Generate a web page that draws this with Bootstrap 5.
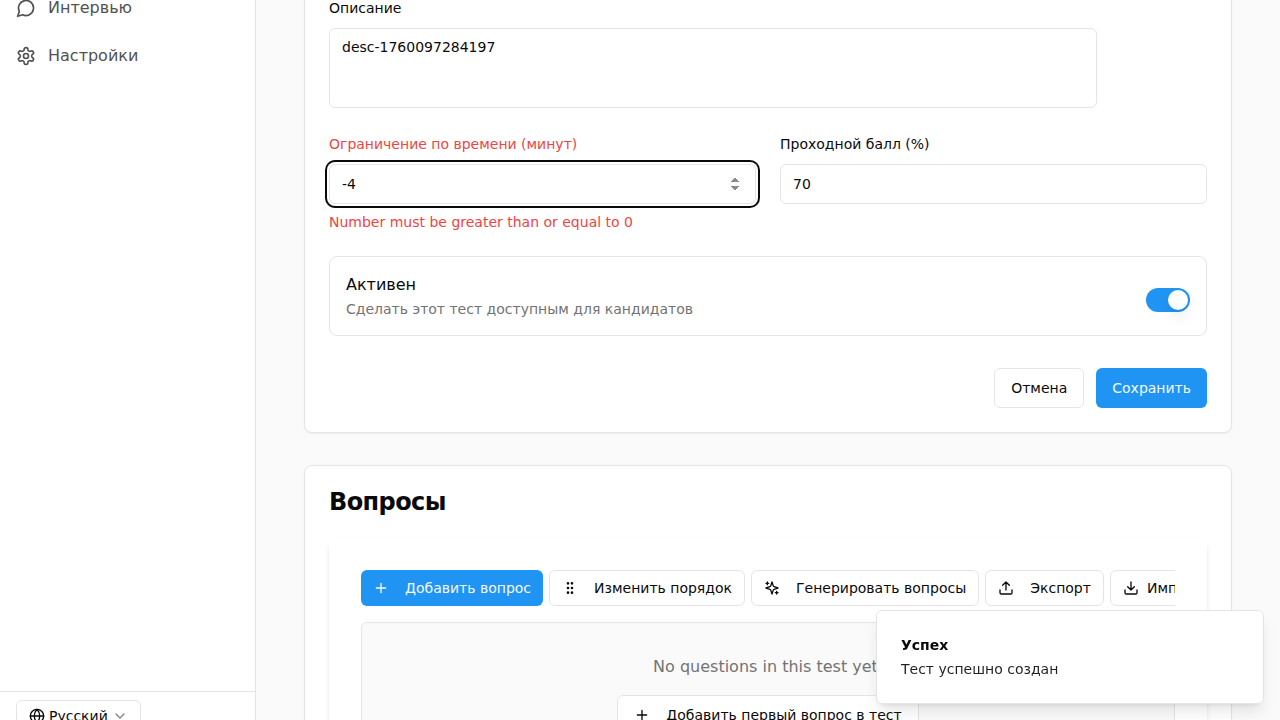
<!DOCTYPE html>
<html lang="ru">
<head>
<meta charset="utf-8">
<meta name="viewport" content="width=device-width, initial-scale=1">
<title>Редактирование теста</title>
<link href="https://cdn.jsdelivr.net/npm/bootstrap@5.3.0/dist/css/bootstrap.min.css" rel="stylesheet">
<style>
  :root {
    --ink: #0a0a0a;
    --line: #e5e5e5;
    --soft: #fafafa;
    --brand: #2094f3;
    --danger: #ef4444;
    --muted: #737373;
  }
  body {
    font-family: "DejaVu Sans", sans-serif;
    font-size: 14px;
    line-height: 20px;
    color: var(--ink);
    background: var(--soft);
  }
  svg {
    fill: none;
    stroke: currentColor;
    stroke-width: 2;
    stroke-linecap: round;
    stroke-linejoin: round;
    flex: none;
  }
  .shell { height: 100vh; }

  /* Sidebar, shown scrolled past its first entries */
  .side {
    width: 256px;
    height: calc(100vh + 20px);
    background: #fff;
    border-right: 1px solid var(--line);
  }
  .side-nav { margin-top: -12px; }
  .side-nav a {
    height: 40px;
    font-size: 16px;
    line-height: 24px;
    color: #525252;
    text-decoration: none;
  }
  .side-foot { border-top: 1px solid var(--line); }

  /* Content, scrolled to the end of the form */
  .content { margin-top: -29px; min-width: 0; }
  .panel {
    background: #fff;
    border: 1px solid var(--line);
    border-radius: 8px;
    box-shadow: 0 1px 2px rgba(0, 0, 0, .05);
  }
  .panel + .panel { margin-top: 32px; }
  .form-label { display: block; line-height: 24px; }
  .form-control {
    font-size: 14px;
    line-height: 20px;
    color: var(--ink);
    background: #fff;
    border-color: var(--line);
    border-radius: 6px;
    padding: 8px 12px;
  }
  input.form-control { height: 40px; }
  textarea.form-control { height: 80px; max-width: 768px; resize: none; }
  .form-control.active,
  .form-control:focus {
    color: var(--ink);
    border-color: var(--line);
    box-shadow: 0 0 0 2px #fff, 0 0 0 4px var(--ink);
  }
  .form-control.active::-webkit-inner-spin-button { opacity: 1; }
  .pair { display: grid; grid-template-columns: 1fr 1fr; gap: 24px; }
  .is-error { color: var(--danger); }
  .hint { color: var(--muted); }

  .option { border: 1px solid var(--line); border-radius: 8px; }
  .option-title { font-size: 16px; line-height: 24px; margin-bottom: 2px; }
  .toggle {
    appearance: none;
    display: block;
    width: 44px;
    height: 24px;
    margin: 0;
    padding: 2px;
    border-radius: 12px;
    background: var(--brand);
  }
  .toggle::before {
    content: "";
    display: block;
    width: 20px;
    height: 20px;
    border-radius: 50%;
    background: #fff;
    box-shadow: 0 10px 15px -3px rgba(0, 0, 0, .1), 0 4px 6px -4px rgba(0, 0, 0, .1);
  }
  .toggle:checked::before { margin-left: 20px; }
  .actions { gap: 12px; margin-top: 32px; }

  .btn {
    --bs-btn-font-size: 14px;
    --bs-btn-line-height: 20px;
    --bs-btn-border-radius: 6px;
    --bs-btn-color: var(--ink);
    --bs-btn-bg: #fff;
    --bs-btn-border-color: var(--line);
    --bs-btn-padding-x: 16px;
    --bs-btn-padding-y: 0px;
    display: inline-flex;
    align-items: center;
    justify-content: center;
    flex: none;
    height: 40px;
    white-space: nowrap;
  }
  .btn-brand {
    --bs-btn-color: #f5faff;
    --bs-btn-bg: var(--brand);
    border-width: 0;
  }
  .btn-tool { --bs-btn-padding-x: 12px; height: 36px; }
  .btn-lang { --bs-btn-padding-x: 12px; height: 32px; }

  .section-title { font-size: 24px; line-height: 24px; font-weight: 700; letter-spacing: -0.025em; }
  .inner-panel {
    border-radius: 8px;
    padding: 32px;
    box-shadow: 0 4px 6px -1px rgba(0, 0, 0, .1), 0 2px 4px -2px rgba(0, 0, 0, .1);
  }
  .tools { gap: 6px; margin-bottom: 16px; }
  .empty {
    background: var(--soft);
    border: 1px solid var(--line);
    border-radius: 6px;
    padding: 32px;
  }
  .empty p { font-size: 16px; line-height: 24px; color: var(--muted); }

  .notice {
    width: 388px;
    background: #fff;
    color: var(--ink);
    border: 1px solid var(--line);
    border-radius: 6px;
    box-shadow: 0 10px 15px -3px rgba(0, 0, 0, .1), 0 4px 6px -4px rgba(0, 0, 0, .1);
  }
  .notice-text { opacity: .9; }
</style>
</head>
<body>
<div class="shell d-flex align-items-start overflow-hidden">
  <aside class="side d-flex flex-column flex-shrink-0">
    <nav class="side-nav d-flex flex-column gap-2 px-3 flex-grow-1" aria-label="Меню">
      <a href="#" class="d-flex align-items-center">
        <svg class="me-2" width="20" height="20" viewBox="0 0 24 24"><path d="M7.9 20A9 9 0 1 0 4 16.1L2 22Z"/></svg>
        <span class="ms-1">Интервью</span>
      </a>
      <a href="#" class="d-flex align-items-center">
        <svg class="me-2" width="20" height="20" viewBox="0 0 24 24"><path d="M12.22 2h-.44a2 2 0 0 0-2 2v.18a2 2 0 0 1-1 1.73l-.43.25a2 2 0 0 1-2 0l-.15-.08a2 2 0 0 0-2.73.73l-.22.38a2 2 0 0 0 .73 2.73l.15.1a2 2 0 0 1 1 1.72v.51a2 2 0 0 1-1 1.74l-.15.09a2 2 0 0 0-.73 2.73l.22.38a2 2 0 0 0 2.73.73l.15-.08a2 2 0 0 1 2 0l.43.25a2 2 0 0 1 1 1.73V20a2 2 0 0 0 2 2h.44a2 2 0 0 0 2-2v-.18a2 2 0 0 1 1-1.73l.43-.25a2 2 0 0 1 2 0l.15.08a2 2 0 0 0 2.73-.73l.22-.39a2 2 0 0 0-.73-2.73l-.15-.08a2 2 0 0 1-1-1.74v-.5a2 2 0 0 1 1-1.74l.15-.09a2 2 0 0 0 .73-2.73l-.22-.38a2 2 0 0 0-2.73-.73l-.15.08a2 2 0 0 1-2 0l-.43-.25a2 2 0 0 1-1-1.73V4a2 2 0 0 0-2-2z"/><circle cx="12" cy="12" r="3"/></svg>
        <span class="ms-1">Настройки</span>
      </a>
    </nav>
    <div class="side-foot px-3 py-2">
      <button type="button" class="btn btn-lang gap-1">
        <svg width="16" height="16" viewBox="0 0 24 24"><circle cx="12" cy="12" r="10"/><path d="M12 2a14.5 14.5 0 0 0 0 20 14.5 14.5 0 0 0 0-20M2 12h20"/></svg>
        Русский
        <svg class="opacity-50" width="16" height="16" viewBox="0 0 24 24"><path d="m6 9 6 6 6-6"/></svg>
      </button>
    </div>
  </aside>

  <main class="content flex-grow-1 px-5">
    <form class="panel p-4" novalidate>
      <div class="mb-4">
        <label class="form-label" for="desc">Описание</label>
        <textarea class="form-control" id="desc">desc-1760097284197</textarea>
      </div>
      <div class="pair mb-4">
        <div>
          <label class="form-label is-error" for="limit">Ограничение по времени (минут)</label>
          <input class="form-control active" id="limit" type="number" value="-4" aria-describedby="limit-error">
          <div class="is-error mt-2" id="limit-error">Number must be greater than or equal to 0</div>
        </div>
        <div>
          <label class="form-label" for="score">Проходной балл (%)</label>
          <input class="form-control" id="score" type="number" value="70">
        </div>
      </div>
      <div class="option d-flex align-items-center justify-content-between p-3">
        <div>
          <label class="option-title d-block" for="enabled">Активен</label>
          <div class="hint">Сделать этот тест доступным для кандидатов</div>
        </div>
        <div class="pt-2"><input class="toggle" id="enabled" type="checkbox" role="switch" checked></div>
      </div>
      <div class="actions d-flex justify-content-end">
        <button type="button" class="btn">Отмена</button>
        <button type="submit" class="btn btn-brand">Сохранить</button>
      </div>
    </form>

    <section class="panel p-4">
      <h2 class="section-title mb-4">Вопросы</h2>
      <div class="inner-panel">
        <div class="tools d-flex overflow-hidden">
          <button type="button" class="btn btn-brand btn-tool"><svg class="me-3" width="16" height="16" viewBox="0 0 24 24"><path d="M5 12h14M12 5v14"/></svg>Добавить вопрос</button>
          <button type="button" class="btn btn-tool"><svg class="me-3" width="16" height="16" viewBox="0 0 24 24"><circle cx="9" cy="12" r="1"/><circle cx="9" cy="5" r="1"/><circle cx="9" cy="19" r="1"/><circle cx="15" cy="12" r="1"/><circle cx="15" cy="5" r="1"/><circle cx="15" cy="19" r="1"/></svg>Изменить порядок</button>
          <button type="button" class="btn btn-tool"><svg class="me-3" width="16" height="16" viewBox="0 0 24 24"><path d="m12 3-1.912 5.813a2 2 0 0 1-1.275 1.275L3 12l5.813 1.912a2 2 0 0 1 1.275 1.275L12 21l1.912-5.813a2 2 0 0 1 1.275-1.275L21 12l-5.813-1.912a2 2 0 0 1-1.275-1.275L12 3ZM5 3v4M19 17v4M3 5h4M17 19h4"/></svg>Генерировать вопросы</button>
          <button type="button" class="btn btn-tool"><svg class="me-3" width="16" height="16" viewBox="0 0 24 24"><path d="M21 15v4a2 2 0 0 1-2 2H5a2 2 0 0 1-2-2v-4M17 8l-5-5-5 5M12 3v12"/></svg>Экспорт</button>
          <button type="button" class="btn btn-tool"><svg class="me-2" width="16" height="16" viewBox="0 0 24 24"><path d="M21 15v4a2 2 0 0 1-2 2H5a2 2 0 0 1-2-2v-4M7 10l5 5 5-5M12 15V3"/></svg>Импорт</button>
        </div>
        <div class="empty text-center">
          <p class="mb-3">No questions in this test yet.</p>
          <button type="button" class="btn"><svg class="me-3" width="16" height="16" viewBox="0 0 24 24"><path d="M5 12h14M12 5v14"/></svg>Добавить первый вопрос в тест</button>
        </div>
      </div>
    </section>
  </main>
</div>

<div class="notice position-fixed bottom-0 end-0 m-3 p-4" role="status">
  <div class="fw-bold mb-1">Успех</div>
  <div class="notice-text">Тест успешно создан</div>
</div>
<script src="https://cdn.jsdelivr.net/npm/bootstrap@5.3.0/dist/js/bootstrap.bundle.min.js"></script>
</body>
</html>
